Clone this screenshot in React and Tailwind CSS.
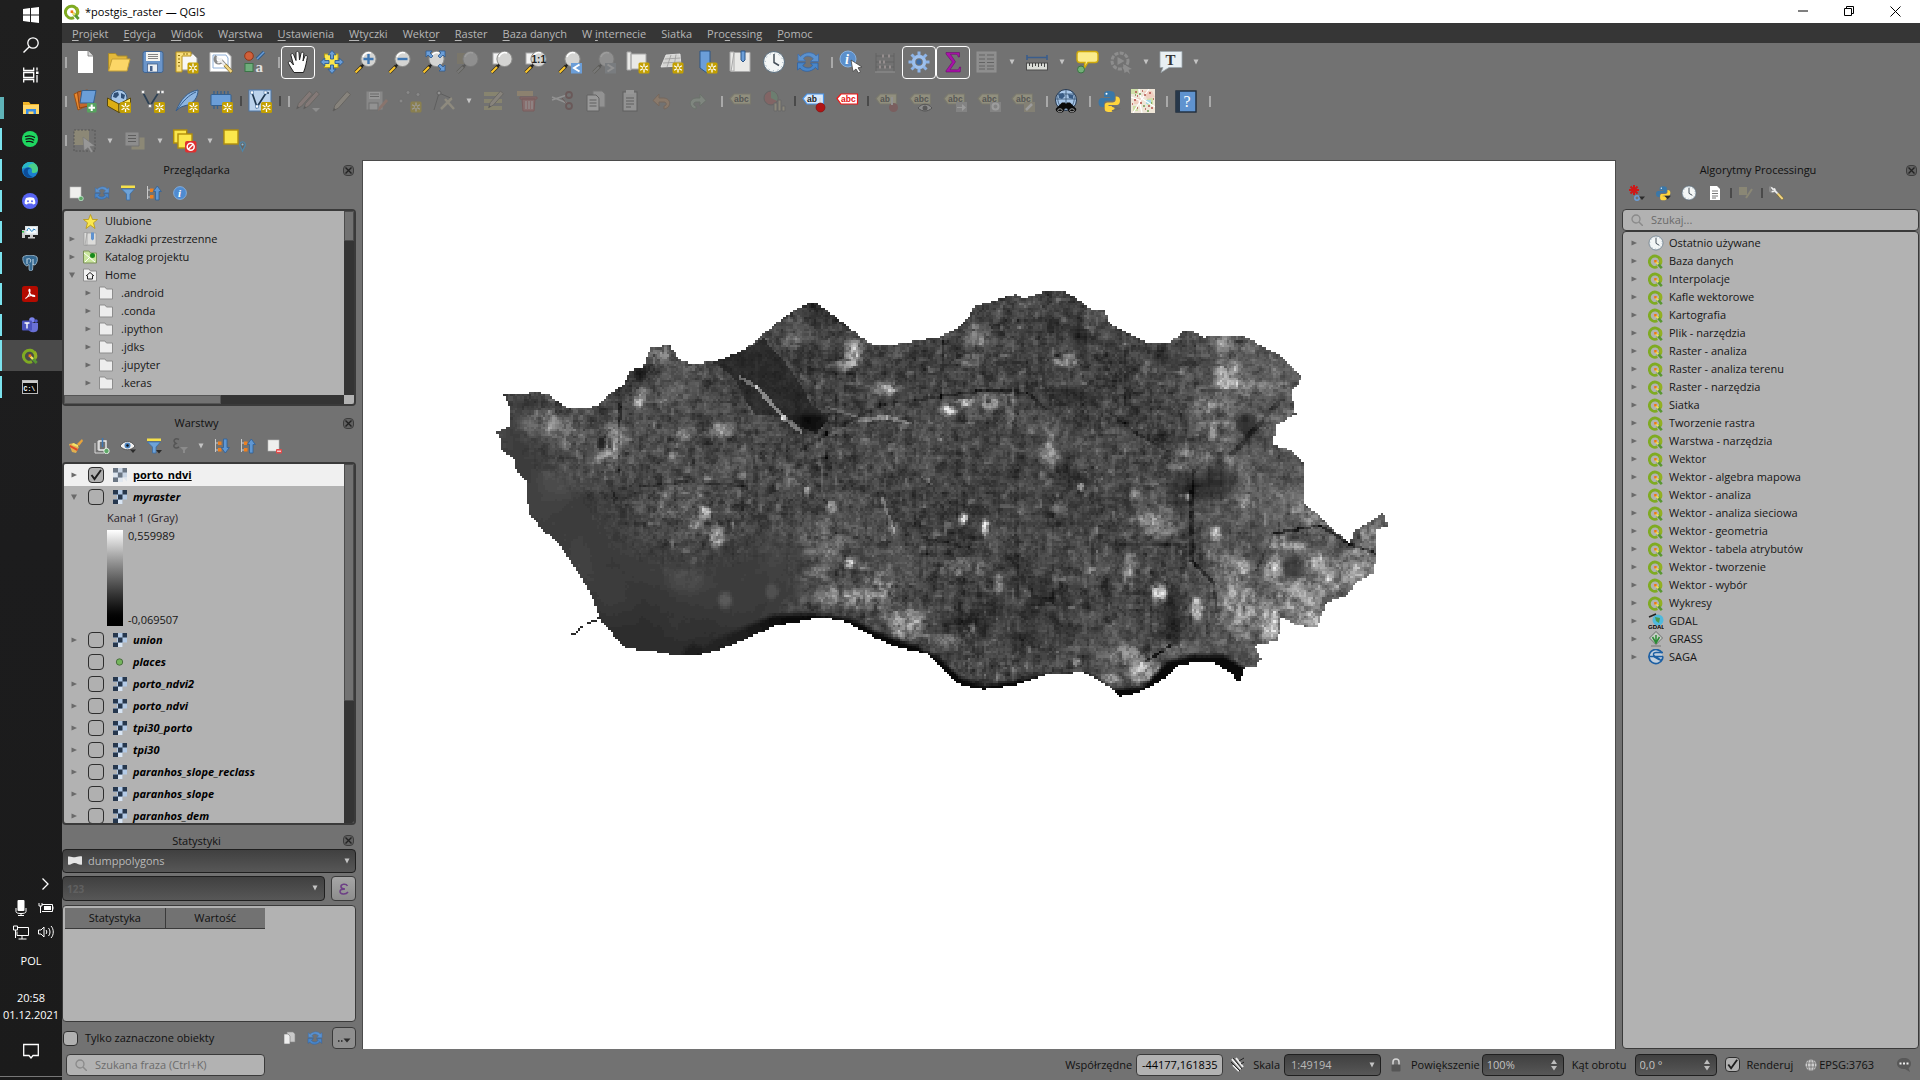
import React, { useMemo } from "react";

/* ---------- small building blocks ---------- */

const Svg = ({ size = "size-6", box = 24, children, label }) => (
  <svg viewBox={`0 0 ${box} ${box}`} className={`${size} shrink-0`} fill="none" role={label ? "img" : undefined} aria-label={label} aria-hidden={label ? undefined : true}>
    {children}
  </svg>
);

const Grip = ({ first }) => (
  <span className={`${first ? "w-[6px]" : "w-[9px]"} flex h-8 shrink-0 items-center justify-end pr-px`}>
    <span className="h-[11px] w-0.5 bg-[#a9a9a9]" />
  </span>
);
const Sep = () => (
  <span className="flex h-8 w-[5px] shrink-0 items-center justify-center">
    <span className="h-[10px] w-0.5 bg-[#4a4a4a]" />
  </span>
);
const Down = ({ label }) => (
  <button type="button" aria-label={label} className="flex h-8 w-4 shrink-0 items-center justify-center">
    <svg viewBox="0 0 6 6" className="size-1.5" aria-hidden="true"><path d="M0.5 0.5h5L3 5.5z" fill="#c4c4c4" /></svg>
  </button>
);
const Tool = ({ name, on, dim, children }) => (
  <button
    type="button"
    aria-label={name}
    disabled={dim}
    className={`flex h-[33px] w-[34px] shrink-0 items-center justify-center rounded border ${on ? "border-white" : "border-transparent"} ${dim ? "opacity-30" : ""}`}
  >
    {children}
  </button>
);

/* ---------- shared icon parts ---------- */

const NewBadge = ({ x = 12, y = 12 }) => (
  <g transform={`translate(${x} ${y})`}>
    <rect x="0.5" y="0.5" width="11" height="11" rx="1.5" fill="#c4a000" />
    <path d="M6 1.500v9M2.100 3.700l7.800 4.600M2.100 8.300l7.800-4.600" stroke="#fff" strokeWidth="1.300" />
    <circle cx="6" cy="6" r="1.200" fill="#c4a000" />
  </g>
);
const Lens = ({ children, gray }) => (
  <>
    <path d="M1.500 22.500L8 16" stroke="#2e2a1c" strokeWidth="3.200" />
    <path d="M1.500 22.500L7 17" stroke={gray ? "#888" : "#fcc52c"} strokeWidth="2.200" />
    <path d="M7.500 16.500l2.500-2.500" stroke="#222" strokeWidth="2.400" />
    <circle cx="14.500" cy="9" r="7.600" fill="#d4d4d2" stroke="#8c8c8a" strokeWidth="1" />
    <path d="M9 7a6 6 0 0 1 8-4" stroke="#fff" strokeWidth="1.500" />
    {children}
  </>
);
const QLogo = ({ size = "size-4" }) => (
  <Svg size={size} box={16}>
    <path d="M12.600 11.200A6 6 0 1 0 10 13.600" stroke="#7fab22" strokeWidth="3" />
    <path d="M13.400 10a6 6 0 0 0-1-6" stroke="#93b023" strokeWidth="3" />
    <path d="M9.500 9.500l5.200 5.500" stroke="#589632" strokeWidth="2.800" />
    <path d="M8 8l3 3" stroke="#f0e06a" strokeWidth="2.200" />
    <rect x="6.600" y="6.400" width="2.600" height="2.600" fill="#ee7913" />
  </Svg>
);
const Refresh = ({ size = "size-6" }) => (
  <Svg size={size}>
    <path d="M2 11V4l2.500 2.500C9 1.500 17 1.500 20 6l2.500-2v7.500h-8l2.800-2.800C14 5 9 5.500 7.500 8.500L9.500 11z" fill="#5b92cf" stroke="#3d6fae" strokeWidth="0.8" />
    <path d="M22 13v7l-2.500-2.500C15 22.500 7 22.500 4 18l-2.500 2V12.800h8l-2.800 2.800C10 19 15 18.500 16.500 15.500L14.500 13z" fill="#4a86c8" stroke="#2f62a3" strokeWidth="0.8" />
  </Svg>
);
const Funnel = ({ menu }) => (
  <Svg size="size-4" box={16}>
    <rect x="1" y="0.5" width="14" height="2.5" fill="#f5e04a" />
    <path d="M1.500 4h13L10 9v6H6.500V9z" fill="#6ea3d8" stroke="#3b6da6" strokeWidth="0.8" />
    {menu && <path d="M10 12h6l-3 3.500z" fill="#2b2b2b" />}
  </Svg>
);
const TreeArrow = ({ up }) => (
  <Svg size="size-4" box={16}>
    <path d="M1.500 1v13M1.500 5h4M1.500 12h4" stroke="#c9c9c9" strokeWidth="1" />
    <rect x="4" y="3.500" width="3.500" height="3.500" fill="#ee8020" />
    <rect x="4" y="10" width="3.500" height="3.500" fill="#ee8020" />
    {up ? (
      <path d="M9.500 15V6.500H7.300L11.300 1l4 5.500h-2.300V15z" fill="#5f97d3" stroke="#2f5f98" strokeWidth="0.8" />
    ) : (
      <path d="M9.500 1v8.500H7.300l4 5.500 4-5.500h-2.300V1z" fill="#5f97d3" stroke="#2f5f98" strokeWidth="0.8" />
    )}
  </Svg>
);
const Clock = ({ size = "size-6" }) => (
  <Svg size={size}>
    <circle cx="12" cy="12" r="10.500" fill="#f3f6f6" stroke="#5b6f80" strokeWidth="1" />
    <path d="M12 4v8.500l5 3" stroke="#45505a" strokeWidth="1.500" />
    <circle cx="12" cy="12" r="8.800" stroke="#8ba1b5" strokeWidth="1" strokeDasharray="1 3.600" />
  </Svg>
);
const Python = ({ menu, size = "size-6" }) => (
  <Svg size={size}>
    <path d="M12 2c-4 0-5 1.500-5 3.500V8h6v1H5c-2.500 0-3.500 2-3.500 4.500S3 18 5 18h2v-3c0-2 1.500-3.200 3.500-3.200h4.500c1.500 0 2.800-1 2.800-2.800V5.500C17.800 3 16 2 12 2z" fill="#3a77a8" />
    <path d="M12.500 23c4 0 5-1.500 5-3.500V17h-6v-1h8c2.500 0 3.500-2 3.500-4.500S21.500 7.500 19.500 7.500h-.8v3c0 2-1.500 3-3.500 3h-4.700c-1.500 0-2.800 1-2.800 2.800v3.200c0 2.500 1 3.500 4.800 3.500z" fill="#ffd43b" />
    <circle cx="9.500" cy="4.800" r="1" fill="#fff" />
    {menu ? <path d="M14 16h10l-5 5.500z" fill="#2b2b2b" /> : <path d="M15 17l7 2.500-7 2.500" stroke="#6b6b6b" strokeWidth="1.500" />}
  </Svg>
);
const Tag = ({ fill, stroke, color, text = "abc", children }) => (
  <Svg>
    <path d="M1 9.500L5 5h16.500v10H5z" fill={fill} stroke={stroke} strokeWidth="1.200" />
    <text x="5" y="12.800" fontFamily="Liberation Sans" fontWeight="700" fontSize="8.500" fill={color}>{text}</text>
    {children}
  </Svg>
);
const Raster = ({ pale }) => {
  const d = pale ? "#6b7683" : "#26374d";
  const l = pale ? "#c9d5e4" : "#b3cae6";
  return (
    <Svg size="size-[14px]" box={14}>
      <rect width="14" height="14" fill={l} />
      <path d="M0 0h5v4.500H0zM9.500 0H14v4.500H9.500zM5 4.500h4.500v5H5zM0 9.500h5V14H0z" fill={d} />
      <path d="M5 10h4.500v4H5z" fill={pale ? "#e1e8f0" : "#d8e4f2"} />
      <path d="M9.500 9.500H14V14H9.500z" fill={pale ? "#f0f0f0" : "#b2b2b2"} />
      <path d="M0 5h4v4H0zM10.500 10h3.500v3.500z" fill={pale ? "#dfe6ee" : "#b2b2b2"} />
    </Svg>
  );
};
const CloseDock = ({ name }) => (
  <button type="button" aria-label={name} className="flex size-[11px] shrink-0 items-center justify-center rounded-sm border border-[#3c3c3c] bg-[#616161]">
    <svg viewBox="0 0 7 7" className="size-[7px]" aria-hidden="true"><path d="M0.500 0.500l6 6M6.500 0.500l-6 6" stroke="#222" strokeWidth="1.400" /></svg>
  </button>
);
const Twist = ({ open, none }) => (
  <svg viewBox="0 0 6 6" className="size-[6px] shrink-0" aria-hidden="true">
    {!none && (open ? <path d="M0 0.500h6L3 6z" fill="#6a6a6a" /> : <path d="M0.500 0.500L6 3 0.500 5.500z" fill="#6a6a6a" />)}
  </svg>
);
const Wrench = () => (
  <>
    <path d="M3 2.500a4.500 4.500 0 1 0 6.500 6L17 17" stroke="#8a8a8a" strokeWidth="3.600" />
    <path d="M3.500 3.500L6 6.500l3-1M4 9.500c3 1 5-1 5-4" stroke="#f0f0f0" strokeWidth="2.200" />
    <path d="M8.500 8.500l5 5" stroke="#f0f0f0" strokeWidth="2.400" />
    <path d="M13 13l8 8.500" stroke="#7d6a2a" strokeWidth="4.200" />
    <path d="M13 13l7.500 8" stroke="#f3d684" strokeWidth="2.800" />
  </>
);
const PencilShape = ({ c = "#b8ad95" }) => (
  <>
    <path d="M3 22l2-6L17 2.500l3.500 3L8.500 19z" fill={c} stroke="#4d463b" strokeWidth="1" />
    <path d="M3 22l1-3 2 1.500z" fill="#222" />
  </>
);

/* ---------- toolbars ---------- */

const Files = () => (
  <>
    <Grip first />
    <Tool name="Nowy projekt"><Svg><path d="M5 1h10l5 5v17H5z" fill="#fff" /><path d="M15 1v5h5" fill="#ddd" stroke="#777" strokeWidth="0.800" /></Svg></Tool>
    <Tool name="Otwórz projekt"><Svg><path d="M1.500 21V3.500h7l2 2.500H20v4" fill="#e3b83a" stroke="#a98b2c" /><path d="M1.500 21L5 9h18l-3 12z" fill="#fcd667" stroke="#c49f36" /></Svg></Tool>
    <Tool name="Zapisz projekt"><Svg><rect x="2" y="1.500" width="20" height="21" rx="2" fill="#6b95c9" stroke="#3f6492" /><rect x="5" y="2" width="14" height="9" fill="#f4f4f0" /><path d="M7 4.500h10M7 6.500h10M7 8.500h10" stroke="#777" strokeWidth="0.900" /><rect x="6.500" y="14" width="10" height="8" fill="#ecf0f4" stroke="#47618a" strokeWidth="0.800" /><rect x="9" y="16" width="2.500" height="5" fill="#47618a" /></Svg></Tool>
    <Tool name="Nowy wydruk"><Svg><path d="M6 4h12l4 4v12H6z" fill="#f7f7f7" stroke="#999" /><path d="M1 2h15v4H7v16H1z" fill="#f8df7e" stroke="#b8921b" /><path d="M3 5.500h2M3 9h2M3 12.500h2M3 16h2M9 3v2M12 3v2" stroke="#8d6d0c" /><NewBadge /></Svg></Tool>
    <Tool name="Menedżer wydruków"><Svg><path d="M1 2.500h17l4 4v15H1z" fill="#fff" stroke="#bbb" /><path d="M4 5h13l2 3v10H4z" stroke="#8fb0d8" /><g transform="translate(5 4) scale(.85)"><Wrench /></g></Svg></Tool>
    <Tool name="Menedżer stylów"><Svg><circle cx="6" cy="6" r="4.300" fill="#d0603a" stroke="#8f3618" /><path d="M14 9l7-7" stroke="#2e5a8a" strokeWidth="3.200" /><path d="M14 9l7-7" stroke="#6b9ed8" strokeWidth="1.500" /><rect x="2" y="13.500" width="8" height="8" fill="#6fae7c" stroke="#3c7548" /><text x="12.500" y="22" fontFamily="Liberation Serif" fontWeight="700" fontSize="15" fill="#e3e3e3">a</text></Svg></Tool>
    <Grip />
    <Tool name="Przesuń mapę" on><Svg><path d="M8 22.500c-2-3-4-6-5.500-9-.8-1.800 1.200-3 2.500-1.500L7.500 15 5 5.500c-.5-2 2-2.700 2.700-.8L10 10.500V3c0-2.200 2.800-2.200 3 0l.5 7 1.500-6.500c.6-2 3-1.500 2.800.5L17 11l1.700-4.500c.8-1.800 3-1 2.600.8-.8 4-1.300 9-3.800 15.200z" fill="#fff" stroke="#222" strokeWidth="1" /></Svg></Tool>
    <Tool name="Przesuń do zaznaczenia"><Svg><rect x="4.500" y="4" width="13.500" height="13.500" fill="#fbe74c" stroke="#b49d1a" /><path d="M12 0.500l4 4.300h-2.500V9h-3V4.800H8zM12 23.500l4-4.300h-2.500V15h-3v4.200H8zM0.500 12l4.300-4v2.500H9v3H4.800V16zM23.500 12l-4.300-4v2.500H15v3h4.200V16z" fill="#6b9ed8" stroke="#2d5c92" strokeWidth="0.900" /></Svg></Tool>
    <Tool name="Powiększ"><Svg><Lens><path d="M14.500 4v10M9.500 9h10" stroke="#3f77b3" strokeWidth="2.400" /></Lens></Svg></Tool>
    <Tool name="Pomniejsz"><Svg><Lens><path d="M9.500 9h10" stroke="#3f77b3" strokeWidth="2.400" /></Lens></Svg></Tool>
    <Tool name="Pokaż cały zasięg"><Svg><Lens><path d="M4 1h6L8 3l3 3-2 2-3-3-2 2zM23 1v6l-2-2-3 3-2-2 3-3-2-2zM23 21h-6l2-2-3-3 2-2 3 3 2-2z" fill="#6b9ed8" stroke="#2d5c92" strokeWidth="0.800" /></Lens></Svg></Tool>
    <Tool name="Powiększ do zaznaczenia" dim><Svg><rect x="1" y="3" width="11" height="11" fill="#8d8258" /><Lens gray /></Svg></Tool>
    <Tool name="Powiększ do warstwy"><Svg><rect x="3" y="3" width="11" height="11" fill="#f4f4f4" stroke="#aaa" /><Lens /></Svg></Tool>
    <Tool name="Rozdzielczość 1:1"><Svg><rect x="2" y="3" width="11" height="11" fill="#f4f4f4" stroke="#aaa" /><Lens /><text x="7.500" y="12.500" fontFamily="Liberation Sans" fontWeight="700" fontSize="10" fill="#222">1:1</text></Svg></Tool>
    <Tool name="Poprzedni widok"><Svg><Lens /><rect x="13" y="13" width="11" height="10.500" fill="#6b9ed8" /><path d="M21.500 14.500L16 18l5.500 3.500" stroke="#fff" strokeWidth="2" /></Svg></Tool>
    <Tool name="Następny widok" dim><Svg><Lens gray /><rect x="13" y="13" width="11" height="10.500" fill="#8b949e" /><path d="M15.500 14.500L21 18l-5.500 3.500" stroke="#ddd" strokeWidth="2" /></Svg></Tool>
    <Tool name="Nowy widok mapy"><Svg><path d="M1 2h4v18H1zM5 4h15v15H5z" fill="#e9e9e7" stroke="#a8a8a8" /><NewBadge /></Svg></Tool>
    <Tool name="Nowy widok 3D"><Svg><path d="M6 5l14-1 1 12-20 1z" fill="#d5d5d3" stroke="#efefef" strokeWidth="0.800" /><path d="M4.500 9l16-1M3 13l18-1M11 5L7 17M16 4.500l-2 12" stroke="#9a9a9a" strokeWidth="0.800" /><NewBadge /></Svg></Tool>
    <Tool name="Nowa zakładka"><Svg><path d="M6 1h10v20l-3 2-7-5z" fill="#6b9ed8" stroke="#2d5687" /><NewBadge /></Svg></Tool>
    <Tool name="Pokaż zakładki"><Svg><path d="M2 2h4v19H2zM6 2.500h16v19H3z" fill="#e9e9e7" stroke="#aaa" /><path d="M13 1h4v9l-2 2-2-2z" fill="#6b9ed8" stroke="#2d5687" /></Svg></Tool>
    <Tool name="Panel czasu"><Clock /></Tool>
    <Tool name="Odśwież"><Refresh /></Tool>
    <Grip />
    <Tool name="Informacje o obiekcie"><Svg><circle cx="9" cy="9" r="8" fill="#5b8fcb" stroke="#88b1df" /><text x="6" y="14" fontFamily="Liberation Serif" fontStyle="italic" fontWeight="700" fontSize="14" fill="#fff">i</text><path d="M12 10l11 7-4 .8 2.500 4-2 1.200-2.500-4-3 2.500z" fill="#fff" stroke="#444" strokeWidth="0.800" /></Svg></Tool>
    <Tool name="Statystyki obiektów" dim><Svg><path d="M3 3v19M21 3v19M3 6h18M3 12h18M3 17h18" stroke="#333" strokeWidth="0.800" /><path d="M2 22h20" stroke="#ddd" /><path d="M6 12h2M10 12h2M6 17h2M11 17h2M16 17h2M9 6h2M15 6h2" stroke="#e6d0d0" strokeWidth="3" /></Svg></Tool>
    <Tool name="Algorytmy" on><Svg><circle cx="12" cy="12" r="5.500" stroke="#9dc0ee" strokeWidth="3.500" /><path d="M12 1.500v4M12 18.500v4M1.500 12h4M18.500 12h4M4.500 4.500l3 3M16.500 16.500l3 3M4.500 19.500l3-3M16.500 7.500l3-3" stroke="#8db4e8" strokeWidth="3" /><circle cx="12" cy="12" r="2.700" fill="#3d6ca8" /></Svg></Tool>
    <Tool name="Statystyki" on><Svg><path d="M5 2.500h13.500v4.500h-1.300c0-2-1-2.700-2.700-2.700H9.500l5 7.500-5.500 8h6.500c2 0 2.800-.8 3-2.800h1.200l-.5 5H5v-1.200l6.300-8.800L5 4z" fill="#a912a9" stroke="#5e0a60" strokeWidth="0.500" /></Svg></Tool>
    <Tool name="Tabela atrybutów" dim><Svg><rect x="2" y="2" width="19" height="20" fill="#ccc" stroke="#ddd" /><path d="M4 5h6M12 5h7M4 9h6M12 9h7M4 12.500h6M12 12.500h7M4 16h6M12 16h7M4 19h6M12 19h7" stroke="#444" /></Svg></Tool>
    <Down label="Tabela – więcej" />
    <Tool name="Zmierz odległość"><Svg><path d="M2 7.500h20M2 5v5M22 5v5" stroke="#3a5d8c" strokeWidth="1.600" /><rect x="1.500" y="13" width="21" height="7" fill="#d9dbd6" stroke="#4a4a4a" /><path d="M4.500 13v3M7.500 13v4M10.500 13v3M13.500 13v4M16.500 13v3M19.500 13v4" stroke="#333" strokeWidth="0.900" /></Svg></Tool>
    <Down label="Pomiary – więcej" />
    <Tool name="Podpowiedzi"><Svg><path d="M4 1.500h16c2 0 3 1.300 3 3v5c0 2-1 3-3 3h-7L9 19l1-6.500H5c-2 0-3-1-3-3v-5c0-1.700 1-3 2-3z" fill="#fbec8c" stroke="#cfa90a" strokeWidth="1.400" /><circle cx="6" cy="19.500" r="3.500" fill="#72b178" stroke="#3a7443" /></Svg></Tool>
    <Tool name="Akcje obiektu" dim><Svg><circle cx="11" cy="11" r="8" stroke="#ccc" strokeWidth="3" strokeDasharray="4 1.300" /><path d="M8.500 7l7 4-7 4z" fill="#ccc" /><path d="M14 14l9 5-3.500.8L21 24l-3-2.500-2.500 1.500z" fill="#ccc" /></Svg></Tool>
    <Down label="Akcje – więcej" />
    <Tool name="Opis tekstowy"><Svg><path d="M1 1.500h22v16H10L2 22.500l2-5H1z" fill="#e8eff3" stroke="#9aa5ab" strokeWidth="0.800" /><text x="6.500" y="14.500" fontFamily="Liberation Serif" fontWeight="700" fontSize="15" fill="#333">T</text></Svg></Tool>
    <Down label="Opisy – więcej" />
  </>
);

const dimTag = { fill: "#d8d49a", stroke: "#8d8a66", color: "#111" };

const Editing = () => (
  <>
    <Grip first />
    <Tool name="Menedżer źródeł danych"><Svg><path d="M1 5l7-3 5 15-8 4z" fill="#ea8a2f" stroke="#9a4f12" /><path d="M4.500 3l10-2 1 16-9 2z" fill="#c4682c" stroke="#8f4512" /><path d="M9 1.500h14L20.500 14H7z" fill="#6b9ed8" stroke="#35608f" /><rect x="14" y="14" width="9.500" height="9.500" rx="1" fill="#57a35f" /><path d="M18.700 15.500v6.500M15.500 18.700H22" stroke="#fff" strokeWidth="2" /></Svg></Tool>
    <Tool name="Nowy GeoPackage"><Svg><circle cx="12" cy="9" r="8" fill="#a7c6e8" stroke="#38597e" /><path d="M7 4l4-1 1 3-3 3-3-1zM14 4l4 2-1 4-3-1z" fill="#2f4f76" /><path d="M0.500 9l11.500 6v8.500L.500 17z" fill="#dcae14" stroke="#5a4a0c" /><path d="M12 15v8.500L23.500 17V9z" fill="#fbe464" stroke="#5a4a0c" /><NewBadge x={12.500} y={12.500} /></Svg></Tool>
    <Tool name="Nowy Shapefile"><Svg><path d="M2 3.500L9 17l8.500-13.500h3" stroke="#2d4155" strokeWidth="1.700" /><path d="M.5 1.500h3v3h-3zM7.500 15.500h3v3h-3zM16 1.500h3v3h-3zM20 1.500h3v3h-3z" fill="#f3f3f3" stroke="#777" strokeWidth="0.600" /><NewBadge x={12.500} y={12.500} /></Svg></Tool>
    <Tool name="Nowa warstwa SpatiaLite"><Svg><path d="M1 22C6 10 12 3 23 1c0 7-4 14-14 16-3 .8-5 2-8 5z" fill="#8eb6e2" stroke="#365e8d" /><path d="M2 21C8 12 14 6 21 3" stroke="#365e8d" /><NewBadge x={12.500} y={12.500} /></Svg></Tool>
    <Tool name="Nowa warstwa tymczasowa"><Svg><path d="M5 2v4M8.500 2v4M12 2v4M15.500 2v4M19 2v4M5 16v4M8.500 16v4" stroke="#35608f" strokeWidth="1.300" /><rect x="2" y="5.500" width="20" height="11" rx="1" fill="#6b9ed8" stroke="#35608f" /><NewBadge x={12.500} y={12.500} /></Svg></Tool>
    <Sep />
    <Tool name="Nowa warstwa wirtualna"><Svg><rect x="1" y="1" width="22" height="21" fill="#bcd3ec" stroke="#4c77a8" /><path d="M4 3.500L9 18 18 4h3" stroke="#22384e" strokeWidth="1.700" /><path d="M2.500 2h3v3h-3zM7.500 16h3v3h-3zM16 2h3v3h-3z" fill="#fff" stroke="#4c77a8" strokeWidth="0.600" /><NewBadge x={12.500} y={12.500} /></Svg></Tool>
    <Sep />
    <Grip />
    <Tool name="Bieżące zmiany" dim><Svg><g transform="translate(-2 0) scale(.9)"><PencilShape c="#b08c84" /></g><g transform="translate(5 0) scale(.9)"><PencilShape c="#b08c84" /></g><path d="M16 19h8l-4 4z" fill="#ccc" /></Svg></Tool>
    <Tool name="Tryb edycji" dim><Svg><PencilShape /></Svg></Tool>
    <Tool name="Zapisz zmiany" dim><Svg><rect x="2" y="2" width="17" height="19" fill="#bbb" stroke="#777" /><rect x="5" y="3" width="11" height="7" fill="#eee" /><path d="M6 5h9M6 7.500h9" stroke="#555" /><rect x="5" y="14" width="9" height="7" fill="#ddd" stroke="#666" /><path d="M14 22l1-4 7-8 2 2-7 8z" fill="#c07b62" /></Svg></Tool>
    <Tool name="Dodaj obiekt" dim><Svg><g fill="#bbb" stroke="#666"><circle cx="3" cy="12" r="2" /><circle cx="10" cy="3.500" r="2" /><circle cx="20" cy="5.500" r="2" /></g><NewBadge /></Svg></Tool>
    <Tool name="Edycja wierzchołków" dim><Svg><path d="M2 21L7 4l14 6" stroke="#333" /><circle cx="7" cy="4" r="2" fill="#ddd" stroke="#333" /><path d="M9 20L20 9M13 10l9 10" stroke="#cfc49b" strokeWidth="2.500" /></Svg></Tool>
    <Down label="Wierzchołki – więcej" />
    <Tool name="Edytuj atrybuty" dim><Svg><path d="M2 3h18v4H2zM2 10h18v4H2zM2 17h18v4H2z" fill="#b9b06a" /><g transform="translate(4 0) scale(.85)"><PencilShape /></g></Svg></Tool>
    <Tool name="Usuń zaznaczone" dim><Svg><path d="M1 2h16v5H1z" fill="#c9a66a" /><path d="M4 8h17v2H4zM6 10h13l-1 12H7z" fill="#b86464" stroke="#8b2e2e" /><path d="M10 12v8M13 12v8M16 12v8" stroke="#eee" /></Svg></Tool>
    <Tool name="Wytnij" dim><Svg><path d="M2 8l15 6M2 11l15-5" stroke="#ddd" strokeWidth="1.500" /><circle cx="19" cy="6" r="3" stroke="#5a2020" strokeWidth="1.800" /><circle cx="19" cy="17" r="3" stroke="#5a2020" strokeWidth="1.800" /><path d="M17 15L12 9" stroke="#5a2020" /></Svg></Tool>
    <Tool name="Kopiuj" dim><Svg><path d="M9 2h9l3 3v13H9z" fill="#ddd" stroke="#888" /><path d="M3 6h9l3 3v13H3z" fill="#f4f4f4" stroke="#444" /><path d="M5.500 11h7M5.500 14h7M5.500 17h7" stroke="#333" /></Svg></Tool>
    <Tool name="Wklej" dim><Svg><rect x="5" y="3" width="14" height="19" fill="#ddd" stroke="#333" /><rect x="8" y="1" width="8" height="4" fill="#eee" /><path d="M8 9h8M8 12h8M8 15h8M8 18h5" stroke="#333" /></Svg></Tool>
    <Tool name="Cofnij" dim><Svg><path d="M12 20c7-1 8-10 0-11H7V5l-6 6.500 6 5.500v-4h5c3 0 3 4 0 4z" fill="#c48a58" stroke="#7a5030" /></Svg></Tool>
    <Tool name="Ponów" dim><Svg><path d="M10 20c-7-1-8-10 0-11h4V5l6 6.500-6 5.500v-4h-4c-3 0-3 4 0 4z" fill="#9fb69f" stroke="#5d735d" /></Svg></Tool>
    <Grip />
    <Tool name="Etykiety warstwy" dim><Tag {...dimTag} /></Tool>
    <Tool name="Diagramy" dim><Svg><circle cx="8" cy="9" r="7" fill="#a94a4a" stroke="#444" /><path d="M8 9V2a7 7 0 0 1 6 10z" fill="#5f9a6e" /><path d="M11 14h3v8h-3zM15 11h3v11h-3zM19 17h3v5h-3z" fill="#c7b98d" stroke="#555" /></Svg></Tool>
    <Sep />
    <Tool name="Podświetl przypięte etykiety"><Tag fill="#d8e9fb" stroke="#4a94e8" color="#222" text="ab"><path d="M18 9v8" stroke="#ddd" strokeWidth="1.800" /><circle cx="18.500" cy="18.500" r="4.500" fill="#b11414" stroke="#7c0d0d" strokeWidth="0.600" /></Tag></Tool>
    <Tool name="Nieumieszczone etykiety"><Tag fill="#fff" stroke="#f01616" color="#e41212" /></Tool>
    <Sep />
    <Tool name="Przypnij etykiety" dim><Tag {...dimTag} text="ab"><circle cx="18.500" cy="18.500" r="4.500" fill="#8d3434" /><path d="M17 8v8" stroke="#ddd" strokeWidth="2" /></Tag></Tool>
    <Tool name="Pokaż etykiety" dim><Tag {...dimTag}><path d="M9 19c4-5 10-5 14 0-4 4-10 4-14 0z" fill="#ccc" stroke="#111" /><circle cx="16" cy="19" r="2.500" fill="#222" /></Tag></Tool>
    <Tool name="Przesuń etykietę" dim><Tag {...dimTag}><rect x="13" y="13" width="11" height="10" fill="#aaa" /><path d="M14 18h5v-3l4 3.500-4 3.500v-3h-5z" fill="#fff" /></Tag></Tool>
    <Tool name="Obróć etykietę" dim><Tag {...dimTag}><rect x="13" y="13" width="11" height="10" fill="#aaa" /><circle cx="18.500" cy="17.500" r="3" stroke="#fff" strokeWidth="2" /></Tag></Tool>
    <Tool name="Zmień etykietę" dim><Tag {...dimTag}><rect x="13" y="13" width="11" height="10" fill="#aaa079" /><path d="M15 21l6-6" stroke="#fff" strokeWidth="2.500" /></Tag></Tool>
    <Grip />
    <Tool name="MetaSearch"><Svg><circle cx="12" cy="11" r="10.500" fill="#a9c8ea" stroke="#24364d" /><path d="M1.500 10h21M4 5h16M12 0.500v20M6 2c-3 5-3 10 0 15M18 2c3 5 3 10 0 15" stroke="#35516f" strokeWidth="0.800" /><path d="M5 5l4-1 2 3-3 3-3-1zM14 5l5 1v4l-4-1z" fill="#385b84" /><path d="M8 13.500h3l1 1.500 1-1.500h3l6 6c1.500 3-3.500 5.500-7 3.500l-2-3.500h-2l-2 3.500c-3.500 2-8.500-.5-7-3.500z" fill="#0a0a0a" /><ellipse cx="6" cy="21.300" rx="2.300" ry="1.500" stroke="#bbb" strokeWidth="0.800" /><ellipse cx="18" cy="21.300" rx="2.300" ry="1.500" stroke="#bbb" strokeWidth="0.800" /></Svg></Tool>
    <Grip />
    <Tool name="Konsola Pythona"><Python /></Tool>
    <Tool name="OpenStreetMap"><Svg><rect width="24" height="24" fill="#efe6d8" /><path d="M0 0h7v5H0zM16 9h6v7h-6zM2 17h5v5H2z" fill="#cfe0a8" /><path d="M12 2h9l3 6-8 2zM3 9h8v6H3z" fill="#f0cfc0" /><path d="M15 11h5v4h-5z" fill="#a5d8e6" /><path d="M0 8l8 3 3 13M8 0l2 9 14 9M2 24l8-13 8-11" stroke="#fff" strokeWidth="1.200" /><path d="M4 3h2M9 14h2M18 4h2M20 19h2M6 19h1M13 6h2M3 11h2M14 20h1M22 10h1M6 7h1M17 17h2M11 2h1M1 15h1" stroke="#b2524c" strokeWidth="1.300" /><path d="M8 5h2M20 14h1M4 6h1M12 17h2M16 22h2" stroke="#6f9a52" strokeWidth="1.300" /></Svg></Tool>
    <Grip />
    <Tool name="Pomoc"><Svg><rect x="2" y="2" width="20" height="21" fill="#5f93cf" stroke="#1f2c3b" strokeWidth="1.400" /><path d="M2 2h4v21H2z" fill="#26374a" /><text x="9.500" y="18" fontFamily="Liberation Serif" fontSize="16" fill="#fff">?</text></Svg></Tool>
    <Grip />
  </>
);

const Selection = () => (
  <>
    <Grip first />
    <Tool name="Wybierz obiekty" dim><Svg><rect x="1" y="1" width="15" height="15" fill="#c8bd80" /><rect x="1" y="1" width="21" height="21" stroke="#111" strokeDasharray="2 1.500" /><path d="M10 8l12 9-5 .5 3 5-2 1.200-3-5-4 3z" fill="#eee" stroke="#777" strokeWidth="0.600" /></Svg></Tool>
    <Down label="Wybór – więcej" />
    <Tool name="Wybierz według wartości" dim><Svg><path d="M8 8h14v13H8z" fill="#c8bd80" stroke="#777" /><path d="M2 3h14v14H2z" fill="#ccc" stroke="#777" /><path d="M5 6.500h8M5 9.500h8M5 12.500h8" stroke="#333" /></Svg></Tool>
    <Down label="Wartości – więcej" />
    <Tool name="Odznacz wszystko"><Svg><rect x="0.700" y="1" width="13" height="13" fill="#fbe74c" stroke="#b08d0c" strokeWidth="1.400" /><rect x="5" y="5" width="14" height="14" fill="#fbe74c" stroke="#b08d0c" strokeWidth="1.400" /><rect x="12" y="12" width="11.500" height="11.500" rx="2" fill="#e03030" /><circle cx="17.700" cy="17.700" r="3.500" stroke="#fff" strokeWidth="1.500" /><path d="M15 20.500l5.500-5.500" stroke="#fff" strokeWidth="1.500" /></Svg></Tool>
    <Down label="Odznacz – więcej" />
    <Tool name="Wybierz po lokalizacji"><Svg><rect x="1" y="1" width="14" height="14" fill="#fbe74c" stroke="#b08d0c" strokeWidth="1.400" /><path d="M19.500 22l-2.500-5a2.800 2.800 0 1 1 5 0z" fill="#666" stroke="#4f86a8" strokeWidth="1.300" /><circle cx="19.500" cy="15.500" r="1" fill="#8cc0dd" /></Svg></Tool>
  </>
);

/* ---------- raster map ---------- */

const OUTLINE = [70,370,110,373,165,365,205,372,240,398,270,415,350,408,385,372,430,345,450,300,490,290,512,232,570,225,600,270,640,282,720,268,800,235,850,190,920,135,985,97,1010,97,1060,135,1130,190,1180,225,1240,222,1330,208,1380,200,1420,180,1455,155,1485,108,1540,92,1605,72,1635,85,1700,62,1750,62,1790,85,1830,115,1873,120,1890,162,1940,185,2000,215,2070,217,2110,182,2130,178,2170,200,2230,193,2285,193,2350,230,2410,262,2468,322,2433,365,2448,430,2390,465,2378,525,2430,537,2468,575,2473,660,2470,695,2520,740,2610,822,2620,785,2710,728,2725,770,2688,775,2690,850,2680,908,2630,935,2600,975,2540,995,2510,1072,2450,1065,2405,1040,2395,1110,2325,1125,2342,1165,2330,1187,2295,1190,2277,1237,2250,1205,2200,1178,2100,1180,2040,1235,1970,1268,1920,1278,1890,1250,1810,1205,1700,1213,1600,1245,1510,1258,1430,1240,1380,1190,1340,1150,1250,1130,1190,1105,1100,1055,1030,1040,880,1068,800,1105,720,1138,640,1157,590,1157,510,1140,435,1135,360,1045,330,965,290,900,235,820,185,775,145,725,140,630,110,600,100,565,60,535,62,505,48,485,88,468,90,415];
const SEA = [20,380,115,380,130,470,200,600,330,640,400,780,520,860,640,890,760,860,860,800,960,840,960,980,900,1100,700,1250,250,1250,0,700];
const RIVER = [600,1170,700,1100,880,1025,1000,1022,1120,1038,1200,1080,1310,1118,1380,1155,1440,1212,1510,1236,1600,1222,1700,1203,1820,1198,1900,1247,1990,1240,2060,1165,2140,1145,2230,1145,2290,1180,2330,1200];
const AIRPORT = [700,275,800,235,850,205,910,270,960,340,990,400,1050,440,1010,490,900,440,820,430,760,320];
// x, y, radius x, radius y, brightness change
const BLOBS = [[1120,245,24,44,115],[1090,285,40,16,60],[1222,355,38,20,100],[1400,420,26,16,140],[1455,397,30,12,120],[1525,395,28,26,110],[478,380,18,32,90],[540,250,32,30,60],[400,510,28,50,60],[180,460,60,40,45],[260,490,70,45,30],[380,560,40,40,35],[365,520,14,20,-75],[725,480,36,26,75],[600,495,30,18,55],[580,560,16,18,60],[675,730,22,20,95],[710,800,22,34,110],[640,765,18,12,60],[250,620,80,60,18],[600,700,110,90,16],[735,990,20,24,38],[620,930,60,40,16],[875,965,20,24,28],[982,664,8,14,150],[1055,710,18,18,80],[1107,880,14,16,160],[1030,820,55,55,35],[1240,775,18,20,60],[1080,980,90,34,55],[1200,960,50,60,60],[1280,1060,50,48,85],[1400,1110,40,16,60],[1010,905,34,18,60],[930,620,30,40,30],[1450,745,12,16,160],[1515,770,10,26,150],[1525,395,8,8,-110],[1430,890,40,26,45],[1500,890,30,20,40],[1555,940,12,30,70],[1500,200,36,44,45],[1480,270,30,20,40],[1590,410,16,50,50],[1760,275,42,16,70],[1710,555,28,42,65],[1804,650,9,12,160],[2125,680,9,12,170],[1430,1080,90,30,-20],[1640,1040,180,90,-18],[1740,710,30,18,45],[2040,750,55,52,50],[1965,670,16,16,50],[2115,545,26,14,60],[2090,585,26,14,60],[2170,560,30,12,45],[2240,310,40,44,85],[2235,220,28,28,65],[2310,350,90,24,35],[2200,420,60,60,25],[2200,480,10,30,70],[2300,470,28,50,-55],[2200,640,60,50,-42],[2110,660,50,50,-38],[2295,700,14,20,60],[2207,795,14,30,90],[2290,890,18,24,110],[2240,880,60,40,30],[2038,965,24,28,125],[1845,900,22,16,60],[1950,880,22,40,55],[2150,1015,18,34,115],[2080,1030,26,90,-35],[2280,1000,60,80,60],[2370,1060,30,60,115],[2380,900,26,36,95],[2440,890,30,34,-60],[2430,830,60,14,60],[2460,980,80,50,55],[2510,870,30,26,95],[2580,920,60,50,60],[2640,880,50,40,60],[2330,850,40,40,-20],[2500,1040,60,30,70],[2400,810,20,20,40],[2670,800,40,40,45],[2480,730,40,30,50],[2340,760,40,40,-15],[1940,1150,50,30,60],[1990,1200,44,40,90],[1890,1225,30,14,80],[2080,1140,50,20,40],[1620,1190,60,14,50],[1470,1085,20,20,60],[1788,1176,12,12,80],[1600,700,260,200,-8],[1750,160,90,60,-8],[1800,200,30,50,-28],[1760,380,50,30,-20],[2075,270,60,30,-25],[200,395,60,16,-30],[640,1150,30,30,-18],[480,315,18,20,-40],[990,460,60,30,-35],[1010,145,40,24,-22],[930,215,40,20,25],[1820,380,60,30,-10]];
// x1, y1, x2, y2, half width, brightness change
const LINES = [[780,322,830,350,5,70],[830,350,910,440,6,90],[910,440,960,480,7,70],[1390,195,1382,385,4,-22],[1382,378,1500,362,4,-30],[1500,362,1640,365,4,-30],[1640,365,1700,420,4,-25],[1040,490,1200,405,5,-24],[1200,405,1382,378,4,-22],[960,540,1040,490,5,-24],[1040,410,1130,440,4,35],[420,400,418,600,4,-30],[480,650,640,630,5,-20],[640,630,800,650,5,-18],[1320,800,1540,850,4,-18],[1140,450,1220,440,6,50],[1220,440,1290,460,5,50],[1205,680,1245,790,4,45],[1325,620,1355,640,4,30],[1940,190,1935,400,4,-18],[2140,600,2135,720,6,-22],[2135,720,2135,870,4,-26],[2135,870,2200,940,5,-35],[2200,940,2215,1040,5,-35],[2250,560,2400,390,7,-24],[2160,360,2340,365,4,-24],[1880,420,1970,490,4,-20],[1970,490,2060,540,4,-20],[2380,790,2520,765,4,-45],[2520,765,2610,822,4,-45],[2610,822,2690,850,4,-50],[1990,1180,2070,1125,4,-60],[2260,940,2330,900,4,-22],[2330,900,2380,790,4,-22],[1720,700,1720,1000,4,-12],[1610,560,1610,1000,4,-12],[1840,590,1840,900,4,-12],[1320,850,1560,860,3,-14],[850,620,1040,560,4,-18],[1020,560,1030,680,4,30],[1920,820,2090,825,4,-14]];

const inside = (p, x, y) => {
  let r = false;
  for (let i = 0, j = p.length - 2; i < p.length; j = i, i += 2) {
    if (p[i + 1] > y !== p[j + 1] > y && x < ((p[j] - p[i]) * (y - p[i + 1])) / (p[j + 1] - p[i + 1]) + p[i]) r = !r;
  }
  return r;
};
const hash = (x, y) => {
  let h = (x * 374761393 + y * 668265263) | 0;
  h = Math.imul(h ^ (h >>> 13), 1274126177);
  return ((h ^ (h >>> 16)) >>> 0) / 4294967295;
};
const noise = (x, y) => {
  const xi = Math.floor(x), yi = Math.floor(y), fx = x - xi, fy = y - yi;
  const a = hash(xi, yi), b = hash(xi + 1, yi), c = hash(xi, yi + 1), d = hash(xi + 1, yi + 1);
  return a + (b - a) * fx + (c - a) * fy + (a - b - c + d) * fx * fy;
};
const riverTop = (x) => {
  for (let i = 0; i < RIVER.length - 2; i += 2) {
    if (x >= RIVER[i] && x < RIVER[i + 2]) return RIVER[i + 1] + ((RIVER[i + 3] - RIVER[i + 1]) * (x - RIVER[i])) / (RIVER[i + 2] - RIVER[i]);
  }
  return 9999;
};
const lineDist = (x, y, [a, b, c, d]) => {
  const dx = c - a, dy = d - b;
  const t = Math.max(0, Math.min(1, ((x - a) * dx + (y - b) * dy) / (dx * dx + dy * dy)));
  return Math.hypot(x - a - t * dx, y - b - t * dy);
};
const RING = [[0, 0], [-45, 0], [45, 0], [0, -45], [0, 45], [-90, 0], [90, 0], [0, -90], [0, 90], [-60, -60], [60, 60], [60, -60], [-60, 60]];
const seaAt = (x, y) => {
  let n = 0;
  for (const [dx, dy] of RING) if (inside(SEA, x + dx, y + dy)) n++;
  return n / RING.length;
};

function buildRaster() {
  const cell = 7;
  const shades = {};
  for (let gy = 8; gy < 184; gy++) {
    for (let gx = 6; gx < 391; gx++) {
      const x = gx * cell + 3.5, y = gy * cell + 3.5;
      if (!inside(OUTLINE, x, y)) continue;
      const sea = seaAt(x, y);
      const own = hash(gx + 500, gy + 300) - 0.5;
      const fine = noise(gx / 1.9, gy / 1.9) - 0.5;
      const streets = noise(gx / 1.3 + 60, gy / 7) - 0.5 + noise(gx / 7, gy / 1.3 + 70) - 0.5;
      const mid = noise(gx / 4 + 40, gy / 4 + 9) - 0.5;
      const wide = noise(gx / 14 + 7, gy / 14 + 3) - 0.5;
      const spark = Math.max(0, noise(gx / 2.4 + 90, gy / 2.4 + 31) - 0.74) * 200;
      const rough = Math.max(0.04, 1 - sea * 1.15);
      let v = 70 - sea * 8 + (own * 22 + fine * 40 + streets * 22 + mid * 26 + spark) * rough + wide * (22 - sea * 8);
      v += Math.max(0, Math.min(18, (x - 2050) / 14));
      if (sea) v -= Math.max(0, (y - 900) / 260) * 20 * sea;
      if (inside(AIRPORT, x, y)) v = 42 + own * 8 + fine * 14 + mid * 10;
      for (const [bx, by, rx, ry, d] of BLOBS) {
        const q = ((x - bx) / rx) ** 2 + ((y - by) / ry) ** 2;
        if (q < 2.6) v += d * Math.exp(-q * q * 0.9) * (0.8 + (fine * 0.9 + own * 0.35) * rough);
      }
      for (const l of LINES) if (lineDist(x, y, l) < l[4]) v += l[5];
      const top = riverTop(x);
      if (y > top) {
        const k = Math.min(1, Math.max(0, (x - 620) / 300)) * Math.min(1, (y - top) / 18);
        v = v * (1 - k) + 9 * k;
      }
      const s = Math.max(6, Math.min(245, Math.round(v / 5) * 5));
      (shades[s] ||= []).push(`M${gx * cell} ${gy * cell}h7v7h-7z`);
    }
  }
  return Object.entries(shades).map(([s, d]) => [Number(s), d.join("")]);
}

const MapCanvas = () => {
  const shades = useMemo(buildRaster, []);
  return (
    <svg viewBox="0 0 1252 887" preserveAspectRatio="xMidYMid meet" className="h-full w-full" role="img" aria-label="porto_ndvi">
      <g transform="translate(117 109) scale(.33333)" shapeRendering="crispEdges">
        {shades.map(([s, d]) => <path key={s} d={d} fill={`rgb(${s},${s},${s})`} />)}
        <path d="M273 1088h14v7h-14zM287 1081h7v7h-7zM294 1074h7v7h-7zM301 1067h7v7h-7zM322 1055h10v7h-10zM332 1048h18v7h-18zM350 1041h14v6h-14z" fill="#2a2a2a" />
      </g>
    </svg>
  );
};

/* ---------- left docks ---------- */

const DockTitle = ({ children, close, short }) => (
  <header className={`flex shrink-0 items-center pr-0.5 text-[#111] ${short ? "h-[17px]" : "h-5"}`}>
    <h2 className="flex-1 pr-3 text-center">{children}</h2>
    <CloseDock name={close} />
  </header>
);
const Mini = ({ name, dim, children }) => (
  <button type="button" aria-label={name} disabled={dim} className={`flex h-6 w-[26px] shrink-0 items-center justify-center ${dim ? "opacity-35" : ""}`}>{children}</button>
);

const Folder = () => (
  <Svg size="size-[14px]" box={14}><path d="M.5 1h5.500l1.500 2h6v10H.5z" fill="#ededed" stroke="#8d8d8d" /></Svg>
);
const BROWSER = [
  { t: "Ulubione", none: true, icon: <Svg size="size-[15px]" box={15}><path d="M7.500.5l2 5h5l-4 3.300 1.500 5.700-4.500-3.300L3 14.500l1.500-5.700-4-3.300h5z" fill="#fbe94f" stroke="#b8950f" strokeWidth="0.800" /></Svg> },
  { t: "Zakładki przestrzenne", icon: <Svg size="size-[14px]" box={14}><path d="M1 .5h3v13H1zM4 1h9v12H2z" fill="#dcdcda" stroke="#9a9a9a" strokeWidth="0.700" /><path d="M8 .5h3V7L9.500 8.500 8 7z" fill="#5f92cf" /></Svg> },
  { t: "Katalog projektu", icon: <Svg size="size-[14px]" box={14}><path d="M.5 1h5.500l1.500 2h6v10H.5z" fill="#c8e59b" stroke="#7c8f5c" /><path d="M1 3l11 9M2 12l5-5" stroke="#fff" /><circle cx="9.500" cy="5.500" r="2.500" fill="#178a1c" /></Svg> },
  { t: "Home", open: true, icon: <Svg size="size-[14px]" box={14}><path d="M.5 1h5.500l1.500 2h6v10H.5z" fill="#f2f2f2" stroke="#8d8d8d" /><path d="M3 8l4-3.500L11 8M4.500 7.500V11H9.500V7.500" stroke="#222" /></Svg> },
  ...[".android", ".conda", ".ipython", ".jdks", ".jupyter", ".keras"].map((t) => ({ t, child: true, icon: <Folder /> })),
];

const Browser = () => (
  <section className="flex shrink-0 flex-col">
    <DockTitle close="Zamknij Przeglądarkę">Przeglądarka</DockTitle>
    <div className="flex h-[29px] shrink-0 items-center pb-1 pl-px">
      <Mini name="Dodaj warstwy"><Svg size="size-4" box={16}><rect x="2" y="2" width="11" height="11" fill="#efefed" stroke="#bbb" strokeWidth="0.600" /><circle cx="13" cy="13.500" r="2.300" fill="#5ea867" stroke="#dfe" strokeWidth="0.600" /></Svg></Mini>
      <Mini name="Odśwież"><Refresh size="size-4" /></Mini>
      <Mini name="Filtruj"><Funnel /></Mini>
      <Mini name="Zwiń wszystko"><TreeArrow up /></Mini>
      <Mini name="Właściwości"><Svg size="size-[14px]" box={14}><circle cx="7" cy="7" r="6.400" fill="#4f8bd0" stroke="#8db6e3" strokeWidth="0.800" /><text x="5" y="11" fontFamily="Liberation Serif" fontStyle="italic" fontWeight="700" fontSize="11" fill="#fff">i</text></Svg></Mini>
    </div>
    <div className="flex h-[197px] overflow-hidden rounded-sm border-2 border-[#3a3a3a] bg-[#b2b2b2]">
      <div className="flex min-w-0 flex-1 flex-col">
        <ul className="min-h-0 flex-1 overflow-hidden pt-px">
          {BROWSER.map((r) => (
            <li key={r.t} className={`flex h-[18px] items-center ${r.child ? "pl-[21px]" : "pl-[5px]"}`}>
              <Twist open={r.open} none={r.none} />
              <span className="ml-2 flex w-[22px] items-center">{r.icon}</span>
              <span>{r.t}</span>
            </li>
          ))}
        </ul>
        <div className="h-[9px] shrink-0 bg-[#343434]"><div className="h-full w-[56%] border border-[#555] bg-[#727272]" /></div>
      </div>
      <div className="flex w-[10px] flex-col bg-[#343434]"><div className="h-[30px] border border-[#4c4c4c] bg-[#727272]" /><div className="mt-auto h-[9px] bg-[#b2b2b2]" /></div>
    </div>
  </section>
);

const LAYERS = [
  { t: "porto_ndvi", on: true },
  { t: "myraster", open: true },
  { t: "union" }, { t: "places", point: true }, { t: "porto_ndvi2" }, { t: "porto_ndvi", id: "b" }, { t: "tpi30_porto" }, { t: "tpi30" },
  { t: "paranhos_slope_reclass" }, { t: "paranhos_slope" }, { t: "paranhos_dem" },
];
const Check = ({ id, checked, size = "size-4" }) => (
  <span className={`relative flex ${size} shrink-0`}>
    <input id={id} type="checkbox" defaultChecked={checked} className={`peer ${size} appearance-none rounded border-[1px] border-[#2e2e2e] bg-[#b0b0b0]`} />
    <svg viewBox="0 0 16 16" className="pointer-events-none absolute inset-0 hidden size-full peer-checked:block" aria-hidden="true"><path d="M3.500 8l3 4L13 3" stroke="#1e1e1e" strokeWidth="2" fill="none" /></svg>
  </span>
);

const Layers = () => (
  <section className="flex min-h-0 flex-1 flex-col">
    <DockTitle close="Zamknij Warstwy">Warstwy</DockTitle>
    <div className="flex h-[29px] shrink-0 items-center pb-1 pl-px">
      <Mini name="Stylizacja"><Svg size="size-4" box={16}><path d="M9 6l5-5 1 2-4 5z" fill="#e8a33a" /><path d="M1 6l5-1 5 4-3 6-4-1z" fill="#e0b050" /><path d="M2 7l8 4-1 2-7-4z" fill="#e04a2a" /><path d="M5 5l5 2v2L4 7z" fill="#f5e36a" /></Svg></Mini>
      <Mini name="Dodaj grupę"><Svg size="size-4" box={16}><path d="M1 5v10h9M4 3v9" stroke="#d9d9d9" /><path d="M5 3h7v9H5z" stroke="#eee" strokeWidth="1.400" /><path d="M8.500 0v9" stroke="#3f77b3" strokeWidth="1.500" /><circle cx="12.500" cy="13" r="2.700" fill="#5ea867" stroke="#fff" strokeWidth="0.800" /></Svg></Mini>
      <Mini name="Widoczność"><Svg size="size-4" box={16}><path d="M0 8c4-6 11-6 15 0-4 5-11 5-15 0z" fill="#f1f1f1" stroke="#444" strokeWidth="0.800" /><circle cx="7.500" cy="7.500" r="3" fill="#4e84bf" /><circle cx="7.500" cy="7.500" r="1.200" fill="#111" /><path d="M10 11.500h6l-3 3.500z" fill="#2b2b2b" /></Svg></Mini>
      <Mini name="Filtruj legendę"><Funnel menu /></Mini>
      <Mini name="Filtr wyrażeniem" dim><Svg size="size-4" box={16}><path d="M7 1.500C3-.5 0 3 4 5.500 0 7 2 12 7 9" stroke="#222" strokeWidth="1.500" /><path d="M8 9h8l-3 3v3h-2v-3z" fill="#bbb" /></Svg></Mini>
      <Down label="Filtr – więcej" />
      <Mini name="Rozwiń wszystko"><TreeArrow /></Mini>
      <Mini name="Zwiń wszystko"><TreeArrow up /></Mini>
      <Mini name="Usuń warstwę"><Svg size="size-4" box={16}><rect x="2" y="2" width="11" height="11" fill="#efefed" stroke="#bbb" strokeWidth="0.600" /><rect x="10" y="11" width="6" height="4.500" rx="1" fill="#e34b4b" /><path d="M11 13.200h4" stroke="#fff" /></Svg></Mini>
    </div>
    <div className="flex min-h-0 flex-1 overflow-hidden rounded-sm border-2 border-[#3a3a3a] bg-[#b2b2b2]">
      <ul className="min-w-0 flex-1 overflow-hidden">
        {LAYERS.map((r) => {
          const id = `layer-${r.t}-${r.id || (r.on ? "top" : "a")}`;
          return (
            <li key={id}>
              <div className={`flex h-[22px] items-center pl-[7px] ${r.on ? "bg-[#f0f0f0]" : ""}`}>
                <Twist open={r.open} none={r.point} />
                <span className="ml-[11px] flex"><Check id={id} checked={r.on} /></span>
                <span className="ml-[9px] flex w-5 items-center">
                  {r.point ? <Svg size="size-[14px]" box={14}><circle cx="6.500" cy="7" r="3.200" fill="#74b55c" stroke="#4b6e40" /></Svg> : <Raster pale={r.on} />}
                </span>
                <label htmlFor={id} className={`font-bold text-black ${r.on ? "underline" : "italic"}`}>{r.t}</label>
              </div>
              {r.open && (
                <div className="pl-[43px]">
                  <div className="flex h-5 items-center text-[#2b1f2b]">Kanał 1 (Gray)</div>
                  <div className="mb-px flex h-[100px] gap-[5px]">
                    <div className="my-0.5 w-4 bg-linear-to-b from-white to-black" />
                    <div className="flex flex-col justify-between leading-[16px]"><span>0,559989</span><span>-0,069507</span></div>
                  </div>
                </div>
              )}
            </li>
          );
        })}
      </ul>
      <div className="w-[10px] bg-[#343434]"><div className="h-[66%] border border-[#4c4c4c] bg-[#727272]" /></div>
    </div>
  </section>
);

const Combo = ({ label, children, className, value }) => (
  <div className={`relative flex items-center ${className}`}>
    <select aria-label={label} defaultValue={value} className={`size-full appearance-none rounded border border-[#1f1f1f] bg-linear-to-b from-[#404040] to-[#575757] text-[#b9b9b9] outline-none ${children ? "pl-[25px]" : "pl-1.5"}`}>
      <option>{value}</option>
    </select>
    {children}
    <svg viewBox="0 0 6 6" className="pointer-events-none absolute right-1.5 size-1.5" aria-hidden="true"><path d="M.5.500h5L3 5.500z" fill="#c4c4c4" /></svg>
  </div>
);

const Stats = () => (
  <section className="flex shrink-0 flex-col">
    <DockTitle short close="Zamknij Statystyki">Statystyki</DockTitle>
    <Combo label="Warstwa" value="dumppolygons" className="h-6 w-full">
      <svg viewBox="0 0 16 12" className="pointer-events-none absolute left-[5px] h-3 w-4" aria-hidden="true"><path d="M1 1.500C5 1 6 3 9 2s5-1 6-.5v8C12 10.500 10 7.500 7 8S4 10.500 1 9.500z" fill="#e4e4e4" /></svg>
    </Combo>
    <div className="mt-[3px] flex gap-1.5">
      <div className="relative h-[25px] flex-1 rounded border border-[#1f1f1f] bg-linear-to-b from-[#404040] to-[#575757]">
        <input aria-label="Pole lub wyrażenie" placeholder="123" className="size-full bg-transparent pl-1 text-[10px] font-bold text-[#b9b9b9] outline-none placeholder:text-[#606060]" />
        <svg viewBox="0 0 6 6" className="pointer-events-none absolute top-2 right-1.5 size-1.5" aria-hidden="true"><path d="M.5.500h5L3 5.500z" fill="#c4c4c4" /></svg>
      </div>
      <button type="button" aria-label="Wyrażenie" className="flex h-[25px] w-[25px] items-center justify-center rounded border border-[#3a3a3a] bg-linear-to-b from-[#a6a6a6] to-[#8d8d8d]">
        <Svg size="size-3" box={12}><path d="M9.500 3C8 0 2.500 1 3 4c.3 1.500 2 2 4 2-3 0-5 .8-5 2.500C2 11.500 8 12 10 9" stroke="#6d3f86" strokeWidth="1.500" /></Svg>
      </button>
    </div>
    <div className="mt-1 h-[117px] rounded-sm border border-[#3a3a3a] bg-[#b2b2b2] p-0.5">
      <table className="w-[200px] table-fixed border-collapse text-[#111]">
        <thead>
          <tr className="h-5 border-b border-[#3a3a3a] bg-[#727272]">
            <th scope="col" className="border-r border-[#3a3a3a] font-normal">Statystyka</th>
            <th scope="col" className="font-normal">Wartość</th>
          </tr>
        </thead>
      </table>
    </div>
    <div className="mt-[5px] flex h-[22px] items-center pl-px text-[#111]">
      <Check id="only-selected" size="size-[15px]" />
      <label htmlFor="only-selected" className="ml-[7px] flex-1">Tylko zaznaczone obiekty</label>
      <Mini name="Kopiuj"><Svg size="size-[14px]" box={14}><path d="M5 1h6l2 2v8H5z" fill="#c9c9c9" stroke="#888" strokeWidth="0.600" /><path d="M2 3h4l2 2v8H2z" fill="#eee" stroke="#777" strokeWidth="0.600" /></Svg></Mini>
      <Mini name="Odśwież"><Refresh size="size-4" /></Mini>
      <button type="button" aria-label="Opcje" className="ml-1 flex h-[22px] w-6 items-center justify-center rounded border border-[#3a3a3a] bg-[#8f8f8f]">
        <Svg size="size-4" box={16}><path d="M2 11h1.500M5 11h1.500" stroke="#222" strokeWidth="1.500" /><path d="M7.500 8.500h7l-3.500 4z" fill="#2b2b2b" /></Svg>
      </button>
    </div>
  </section>
);

/* ---------- right dock ---------- */

const ALGS = ["Ostatnio używane", "Baza danych", "Interpolacje", "Kafle wektorowe", "Kartografia", "Plik - narzędzia", "Raster - analiza", "Raster - analiza terenu", "Raster - narzędzia", "Siatka", "Tworzenie rastra", "Warstwa - narzędzia", "Wektor", "Wektor - algebra mapowa", "Wektor - analiza", "Wektor - analiza sieciowa", "Wektor - geometria", "Wektor - tabela atrybutów", "Wektor - tworzenie", "Wektor - wybór", "Wykresy", "GDAL", "GRASS", "SAGA"];
const algIcon = (t) => {
  if (t === "Ostatnio używane") return <Clock size="size-4" />;
  if (t === "GDAL") return <Svg size="size-4" box={16}><circle cx="10" cy="7" r="5.500" fill="#4fb9dc" /><path d="M7 4l5 1-1 5-3-2z" fill="#4a9a4e" /><path d="M1 4l7-3" stroke="#222" strokeWidth="1.600" /><text x="0" y="15.500" fontFamily="Liberation Sans" fontWeight="700" fontSize="6" fill="#000">GDAL</text></Svg>;
  if (t === "GRASS") return <Svg size="size-4" box={16}><path d="M8 .5l6.500 6.500L8 13.500 1.500 7z" fill="#c4cfc4" stroke="#555" strokeWidth="0.800" /><path d="M8 13V4M8 12L4.500 6M8 12l3.500-6" stroke="#2c8a35" strokeWidth="1.500" /><path d="M3 15h10" stroke="#777" /></Svg>;
  if (t === "SAGA") return <Svg size="size-4" box={16}><path d="M14 4A7 7 0 1 0 14.500 10" stroke="#1c5fa3" strokeWidth="1.700" fill="#c3d0de" /><path d="M15 3.500H8c-3 0-3.500 2.500-1 4l5 3M1.500 7.500h13.500M15 7.500c0 3-2 4.500-4 3L5 7" stroke="#1c5fa3" strokeWidth="1.500" /></Svg>;
  return <QLogo size="size-[15px]" />;
};

const Processing = () => (
  <aside className="flex w-[298px] shrink-0 flex-col pr-px">
    <DockTitle close="Zamknij Algorytmy">Algorytmy Processingu</DockTitle>
    <div className="flex h-[29px] shrink-0 items-center pb-1 pl-[2px]">
      <Mini name="Modele"><Svg size="size-4" box={16}><path d="M5 0v10M0 5h10M1.500 1.500l7 7M8.500 1.500l-7 7" stroke="#cf1717" strokeWidth="2" /><circle cx="8" cy="13" r="2.200" stroke="#6b9ed8" strokeWidth="1.500" /><path d="M10 11.500h6l-3 3.500z" fill="#2b2b2b" /></Svg></Mini>
      <Mini name="Skrypty"><Python menu size="size-4" /></Mini>
      <Mini name="Historia"><Clock size="size-4" /></Mini>
      <Mini name="Wyniki"><Svg size="size-4" box={16}><path d="M3 1h7l3 3v11H3z" fill="#fff" /><path d="M5 6h6M5 8.500h6M5 11h6M5 13h4" stroke="#777" /></Svg></Mini>
      <Sep />
      <Mini name="Edycja w miejscu" dim><Svg size="size-4" box={16}><rect x="1" y="2" width="8" height="8" fill="#b9b07c" /><path d="M8 13l6-9" stroke="#b9b07c" strokeWidth="2" /></Svg></Mini>
      <Sep />
      <Mini name="Opcje"><Svg size="size-4"><Wrench /></Svg></Mini>
    </div>
    <div className="flex h-[22px] shrink-0 items-center rounded border border-[#3a3a3a] bg-[#b2b2b2] pl-2">
      <Svg size="size-3" box={12}><circle cx="5" cy="5" r="4" stroke="#8a8a8a" strokeWidth="1.300" /><path d="M8 8l4 4" stroke="#8a8a8a" strokeWidth="1.500" /></Svg>
      <input aria-label="Szukaj algorytmu" placeholder="Szukaj..." className="ml-2 min-w-0 flex-1 bg-transparent outline-none placeholder:text-[#6b6b6b]" />
    </div>
    <ul className="min-h-0 flex-1 overflow-hidden rounded-sm border-[1px] border-[#3a3a3a] bg-[#b2b2b2] pt-0.5">
      {ALGS.map((t) => (
        <li key={t} className="flex h-[18px] items-center pl-2">
          <Twist />
          <span className="ml-[11px] flex w-[21px] items-center">{algIcon(t)}</span>
          <span>{t}</span>
        </li>
      ))}
    </ul>
  </aside>
);

/* ---------- windows taskbar ---------- */

const APPS = [
  ["Eksplorator", <Svg size="size-4" box={16}><path d="M0 2h6l1.500 2H16v10H0z" fill="#f0b429" /><path d="M0 5h16v9H0z" fill="#ffd768" /><path d="M3 9h10v5h-2.500v-2.500h-5V14H3z" fill="#3a8ee6" /></Svg>],
  ["Spotify", <Svg size="size-4" box={16}><circle cx="8" cy="8" r="8" fill="#1ed760" /><path d="M3.500 5.500c3-1 6.500-.700 9 .8M4 8.200c2.500-.800 5.500-.5 7.800.8M4.500 10.700c2-.600 4.500-.4 6.500.7" stroke="#111" strokeWidth="1.300" strokeLinecap="round" /></Svg>],
  ["Edge", <Svg size="size-4" box={16}><circle cx="8" cy="8" r="8" fill="#1b7fd0" /><path d="M0 7C1 2 5 0 8 0c5 0 8 3.500 8 7 0 3-2 4-4 4-3 0-2-1.500-2-3 0-2-2-3-4-3C3 5 1 6 0 7z" fill="#49d089" /><path d="M0 7C1 2 5 0 8 0c2 0 3.500.5 5 1.500C9 1 7 3 6 5 3 5 1 6 0 7z" fill="#28b5c9" /><path d="M6 8c-1 3 1 6 5 7-5 2-9-1-9.500-4.500C1 6.500 6 4 9 7c-1.500-.5-2.500 0-3 1z" fill="#0c4d98" /></Svg>],
  ["Discord", <Svg size="size-4" box={16}><circle cx="8" cy="8" r="8" fill="#5865f2" /><path d="M4 5c2.500-1 5.500-1 8 0 1 2 1.500 3.500 1.300 5.500-1 .8-2 1-2.300 1l-.8-1H5.800l-.8 1c-.5 0-1.500-.4-2.300-1C2.500 8.500 3 7 4 5z" fill="#fff" /><circle cx="6" cy="8.300" r="1" fill="#5865f2" /><circle cx="10" cy="8.300" r="1" fill="#5865f2" /></Svg>],
  ["Monitor", <Svg size="size-4" box={16}><path d="M0 6h3v8H0z" fill="#c9c9c9" /><path d="M0 7h2v1.500H0z" fill="#2fc24a" /><rect x="3" y="2" width="13" height="9" fill="#d8dde0" /><rect x="4.500" y="3" width="10" height="6.500" fill="#f3fafd" /><path d="M5 7c1-4 2.500-3 3.500-1s2 2 3-1l2 1" stroke="#1c7cc4" /><path d="M8 11h3v2H8zM6 13h7v1.500H6z" fill="#c9c9c9" /></Svg>],
  ["pgAdmin", <Svg size="size-4" box={16}><path d="M1 2c3-2.500 11-2.500 14 0 1 3 0 6-2 8l-2-.5-.5 5.500C9 16.500 7 16 7 14V9.500L5 11C3 11 0 6 1 2z" fill="#35688f" stroke="#a9c4d8" strokeWidth="0.800" /><path d="M5 3.500V9M5.500 4c3-1 4 1 2.500 3.500M11 4v6" stroke="#d7e5ef" strokeWidth="0.900" /></Svg>],
  ["Acrobat", <Svg size="size-4" box={16}><rect width="16" height="16" rx="2.500" fill="#b30b00" /><path d="M3.500 12.500C6 11 8.500 7 8 4c-.3-1.500-1.500-.5-1 1 .8 3 3 5.500 5.500 5.500 1-.5-.5-1.500-2.500-1.300-2.500.3-5 1.300-6.500 3.300z" stroke="#fff" strokeWidth="1.100" /></Svg>],
  ["Teams", <Svg size="size-4" box={16}><circle cx="10" cy="3" r="2.800" fill="#7b83eb" /><circle cx="14" cy="4" r="1.800" fill="#5059c9" /><path d="M6 6h10v5c0 3-2 4-3 4-4 1-6-1-7-3z" fill="#6970d6" /><rect x="0" y="3.500" width="10" height="10" rx="1" fill="#4b53bc" /><path d="M2.500 6h5M5 6v5.500" stroke="#fff" strokeWidth="1.400" /></Svg>],
  ["QGIS", <QLogo />],
  ["Wiersz poleceń", <Svg size="size-4" box={16}><rect x="0.500" y="1.500" width="15" height="13" fill="#0c0c0c" stroke="#bbb" /><path d="M1 2h14v2H1z" fill="#ccc" /><text x="1.500" y="11.500" fontFamily="Liberation Mono" fontWeight="700" fontSize="6.500" fill="#fff">C:\</text></Svg>],
];

const Taskbar = () => (
  <nav aria-label="Pasek zadań" className="flex w-[62px] shrink-0 flex-col items-stretch bg-linear-to-b from-[#1f1f1f] via-[#1c1c1d] to-[#1b1b1b] text-white">
    <button type="button" aria-label="Start" className="flex h-[30px] items-center justify-center"><Svg size="size-4" box={16}><path d="M0 2l7-1v6.500H0zM8 1l8-1v7.500H8zM0 8.500h7V15l-7-1zM8 8.500h8V16l-8-1z" fill="#fff" /></Svg></button>
    <button type="button" aria-label="Wyszukaj" className="flex h-[30px] items-center justify-center"><Svg size="size-4" box={16}><circle cx="10" cy="6" r="5.200" stroke="#fff" strokeWidth="1.300" /><path d="M6.300 9.700L0.500 15.500" stroke="#fff" strokeWidth="1.400" /></Svg></button>
    <button type="button" aria-label="Widok zadań" className="mb-0.5 flex h-[30px] items-center justify-center"><Svg size="size-4" box={16}><path d="M.7.5v3h10v-3M.7 15.500v-3h10v3M.7 5.500h10v5H.7zM14 .5v3M14 8v7.500" stroke="#fff" strokeWidth="1.300" /><rect x="13" y="4.500" width="2.500" height="2.500" fill="#fff" /></Svg></button>
    {APPS.map(([name, icon], i) => (
      <button key={name} type="button" aria-label={name} className={`flex h-[31px] items-center ${name === "QGIS" ? "bg-[#4a4a4a]" : ""}`}>
        <span className={`${name === "QGIS" ? "h-full" : "h-[22px]"} ${i === 0 ? "w-1 bg-[#5fb3b8]" : "w-0.5 bg-[#7be3ee]"}`} />
        <span className="flex flex-1 justify-center pr-1">{icon}</span>
      </button>
    ))}
    <div className="mt-auto flex flex-col">
      <button type="button" aria-label="Ukryte ikony" className="flex h-6 items-center justify-end pr-[11px]"><Svg size="size-3" box={12}><path d="M3.500 0.500L9 6l-5.500 5.500" stroke="#fff" strokeWidth="1.300" /></Svg></button>
      <div className="grid grid-cols-2 place-items-center gap-y-2 pr-1 pl-2 pt-1">
        <Svg size="size-4" box={16} label="Mikrofon"><rect x="4.500" y="0" width="7" height="11" rx="1" fill="#fff" /><path d="M3 8v3.500C3 13 5 13.500 8 13.500s5-.5 5-2V8M8 13.500V16M5 15.500h6" stroke="#fff" /></Svg>
        <Svg size="size-4" box={16} label="Bateria"><path d="M4 4.500h10.500v7H4M15 6.500v3" stroke="#fff" /><rect x="6" y="6" width="7" height="4" fill="#fff" /><path d="M1 3v3h3V3M2.500 6v7" stroke="#fff" /></Svg>
        <Svg size="size-4" box={16} label="Sieć"><path d="M5 3.500h10.500v8H4v-4M9 12v3M5.500 15h8M.5 2h4v4h-4zM2.500 6v8" stroke="#fff" /></Svg>
        <Svg size="size-4" box={16} label="Głośność"><path d="M.5 6h2.500l3-3v10l-3-3H.5zM8 6c1 1 1 3 0 4M10.500 4c2 2 2 6 0 8M13 2c3 3 3 9 0 12" stroke="#fff" /></Svg>
      </div>
      <div className="mt-[5px] flex h-8 items-center justify-center">POL</div>
      <div className="mt-3 text-center leading-[17px]"><div>20:58</div><div className="whitespace-nowrap">01.12.2021</div></div>
      <button type="button" aria-label="Powiadomienia" className="mt-[14px] mb-[11px] flex h-7 items-center justify-center"><Svg size="size-4" box={16}><path d="M.7 1.500h14.600v11H10L8 15l-2-2.500H.7z" stroke="#fff" strokeWidth="1.300" /></Svg></button>
      <div className="h-1 border-t border-[#777]" />
    </div>
  </nav>
);

/* ---------- status bar ---------- */

const Spin = ({ id, value }) => (
  <span className="flex h-[22px] w-[82px] items-center rounded border border-[#1f1f1f] bg-linear-to-b from-[#404040] to-[#575757] pr-1.5 pl-1">
    <input id={id} defaultValue={value} className="min-w-0 flex-1 bg-transparent text-[#c2c2c2] outline-none" />
    <svg viewBox="0 0 6 12" className="h-3 w-1.5" aria-hidden="true"><path d="M0 5l3-4.500L6 5zM0 7l3 4.500L6 7z" fill="#bdbdbd" /></svg>
  </span>
);

const Status = () => (
  <footer className="flex h-[31px] shrink-0 items-center pr-2 pl-1 text-[#111]">
    <div className="flex h-[22px] w-[199px] items-center rounded border border-[#3a3a3a] bg-[#b2b2b2] pl-2">
      <Svg size="size-3" box={12}><circle cx="5" cy="5" r="4" stroke="#8a8a8a" strokeWidth="1.300" /><path d="M8 8l4 4" stroke="#8a8a8a" strokeWidth="1.500" /></Svg>
      <input aria-label="Szukana fraza" placeholder="Szukana fraza (Ctrl+K)" className="ml-2 min-w-0 flex-1 bg-transparent outline-none placeholder:text-[#6b6b6b]" />
    </div>
    <div className="ml-auto flex items-center">
      <label htmlFor="coords" className="mr-1">Współrzędne</label>
      <input id="coords" defaultValue="-44177,161835" className="h-[22px] w-[87px] rounded border border-[#3a3a3a] bg-[#b2b2b2] text-center text-black outline-none" />
      <button type="button" aria-label="Zasięg" className="mx-1 flex w-[22px] justify-center"><Svg size="size-4" box={16}><path d="M2 2l9 10M6 1l7 9M3 8l6 6" stroke="#eee" strokeWidth="2" /><path d="M3 1l9 11M1 5l9 9M9 4l5-3M11 7l3-2" stroke="#222" /></Svg></button>
      <span className="mr-1">Skala</span>
      <Combo label="Skala" value="1:49194" className="h-[22px] w-[97px]" />
      <button type="button" aria-label="Zablokuj skalę" className="mx-1 flex w-[22px] justify-center"><Svg size="size-[14px]" box={14}><path d="M4 7V4a3 3 0 0 1 6 0v3" stroke="#d6d6d6" strokeWidth="1.500" /><rect x="2.500" y="6.500" width="9" height="7" rx="1" fill="#555" /></Svg></button>
      <label htmlFor="magnifier" className="mr-0.5">Powiększenie</label>
      <Spin id="magnifier" value="100%" />
      <label htmlFor="rotation" className="mr-2 ml-2">Kąt obrotu</label>
      <Spin id="rotation" value="0,0 °" />
      <span className="ml-2 flex"><Check id="render" checked size="size-[15px]" /></span>
      <label htmlFor="render" className="ml-[7px]">Renderuj</label>
      <button type="button" className="ml-3 flex items-center gap-0.5"><Svg size="size-3" box={12}><circle cx="6" cy="6" r="5.500" fill="#cfcfcf" /><path d="M0.500 4h11M0.500 8h11M6 .5v11M4 1c-2 3-2 7 0 10M8 1c2 3 2 7 0 10" stroke="#666" strokeWidth="0.700" /></Svg>EPSG:3763</button>
      <button type="button" aria-label="Komunikaty" className="ml-[22px] flex"><Svg size="size-4" box={16}><path d="M8 1c4 0 7 2 7 5.500 0 2-1 3.500-2.500 4.500l1.500 4-5-3C4 12 1 10 1 6.500S4 1 8 1z" fill="#585858" /><path d="M3.500 6.500h2M7 6.500h2M10.500 6.500h2" stroke="#eee" strokeWidth="2" /></Svg></button>
    </div>
  </footer>
);

/* ---------- window ---------- */

const MENU = [["", "P", "rojekt"], ["", "E", "dycja"], ["", "W", "idok"], ["W", "a", "rstwa"], ["", "U", "stawienia"], ["", "W", "tyczki"], ["Wekt", "o", "r"], ["", "R", "aster"], ["", "B", "aza danych"], ["W ", "i", "nternecie"], ["Siatka", "", ""], ["Pro", "c", "essing"], ["", "P", "omoc"]];

export default function App() {
  return (
    <div className="flex h-screen min-h-[800px] w-full overflow-hidden bg-[#727272] font-['Open_Sans','Noto_Sans',sans-serif] text-[11px] leading-[18px] text-[#161616]">
      <Taskbar />
      <div className="flex min-w-0 flex-1 flex-col">
        <header className="flex h-[23px] shrink-0 items-center bg-white pl-0.5 text-black">
          <QLogo />
          <h1 className="ml-[5px]">*postgis_raster — QGIS</h1>
          <div className="ml-auto flex pr-0.5">
            <button type="button" aria-label="Minimalizuj" className="flex h-[23px] w-[46px] items-center justify-center"><Svg size="size-[11px]" box={11}><path d="M0 5h10" stroke="#000" /></Svg></button>
            <button type="button" aria-label="Przywróć" className="flex h-[23px] w-[46px] items-center justify-center"><Svg size="size-[11px]" box={11}><path d="M.5 2.500h7v7h-7zM2.500 2.500v-2h7v7h-2" stroke="#000" /></Svg></button>
            <button type="button" aria-label="Zamknij" className="flex h-[23px] w-[46px] items-center justify-center"><Svg size="size-[11px]" box={11}><path d="M.5.500l10 10M10.500.500l-10 10" stroke="#000" /></Svg></button>
          </div>
        </header>
        <nav aria-label="Menu" className="flex h-5 shrink-0 items-center gap-[15px] bg-[#363636] pt-px pl-[10px] text-[#b6b6b6]">
          {MENU.map(([a, u, b]) => (
            <button key={a + u + b} type="button" className="whitespace-pre">{a}<span className="underline underline-offset-2">{u}</span>{b}</button>
          ))}
        </nav>
        <div className="flex h-[38px] shrink-0 items-center"><Files /></div>
        <div className="flex h-10 shrink-0 items-center"><Editing /></div>
        <div className="flex h-[39px] shrink-0 items-center"><Selection /></div>
        <main className="flex min-h-0 flex-1">
          <div className="flex w-[294px] shrink-0 flex-col gap-[7px]">
            <Browser />
            <Layers />
            <Stats />
          </div>
          <div className="mx-[6px] min-w-0 flex-1 border border-b-0 border-[#4b4b4b] bg-white">
            <MapCanvas />
          </div>
          <Processing />
        </main>
        <Status />
      </div>
    </div>
  );
}
